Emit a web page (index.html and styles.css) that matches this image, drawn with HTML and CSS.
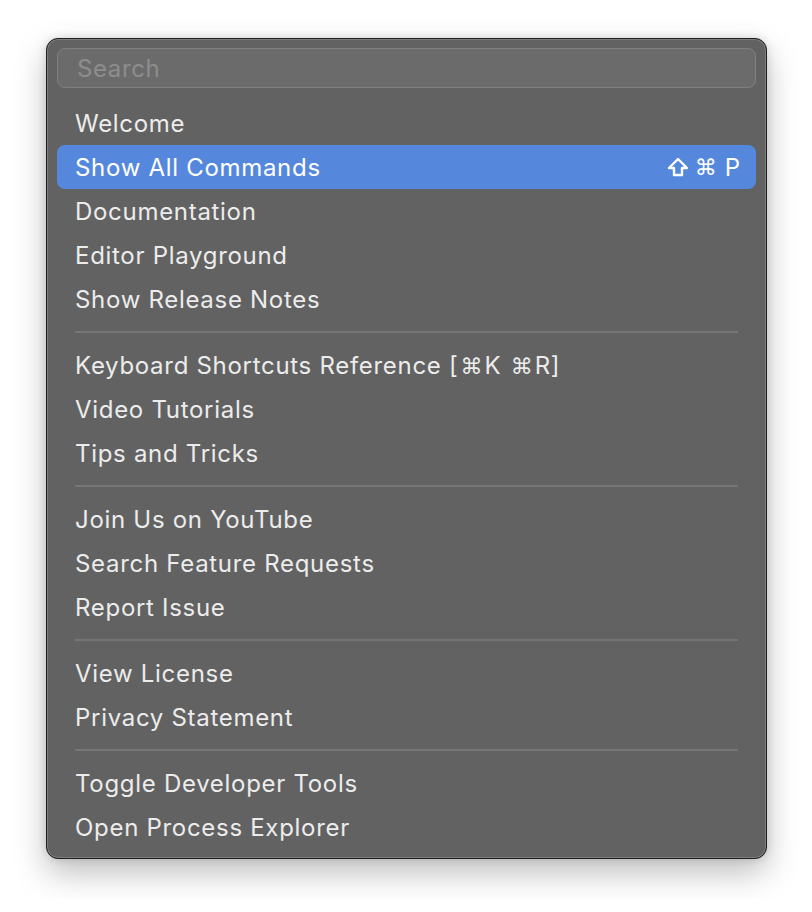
FILE: index.html
```html
<!DOCTYPE html>
<html>
<head>
<meta charset="utf-8">
<link rel="stylesheet" href="styles.css">
</head>
<body>
<div class="menu">
  <div class="search">Search</div>
  <div class="list">
    <div class="item"><span>Welcome</span></div>
    <div class="item active"><span>Show All Commands</span>
      <span class="keys">
        <svg class="shift" width="22" height="20" viewBox="0 0 22 20"><path d="M11 2 L20 11 L15 11 L15 18 L7 18 L7 11 L2 11 Z" fill="none" stroke="#fff" stroke-width="2.4" stroke-linejoin="round"/></svg>
        <span class="cmd">⌘</span>
        <span class="p">P</span>
      </span>
    </div>
    <div class="item"><span>Documentation</span></div>
    <div class="item"><span>Editor Playground</span></div>
    <div class="item"><span>Show Release Notes</span></div>
    <div class="sep"></div>
    <div class="item"><span>Keyboard Shortcuts Reference [<span class="sym">⌘</span>K <span class="sym">⌘</span>R]</span></div>
    <div class="item"><span>Video Tutorials</span></div>
    <div class="item"><span>Tips and Tricks</span></div>
    <div class="sep"></div>
    <div class="item"><span>Join Us on YouTube</span></div>
    <div class="item"><span>Search Feature Requests</span></div>
    <div class="item"><span>Report Issue</span></div>
    <div class="sep"></div>
    <div class="item"><span>View License</span></div>
    <div class="item"><span>Privacy Statement</span></div>
    <div class="sep"></div>
    <div class="item"><span>Toggle Developer Tools</span></div>
    <div class="item"><span>Open Process Explorer</span></div>
  </div>
</div>
</body>
</html>
```

FILE: styles.css
```css
html, body {
  margin: 0;
  background: #ffffff;
}
body {
  padding: 38px 0 40px 46px;
  font-family: "Inter", "Liberation Sans", sans-serif;
}
.menu {
  box-sizing: border-box;
  width: 721px;
  background: #626262;
  border: 1px solid #1e1e1e;
  border-radius: 12px;
  box-shadow: inset 0 0 0 1px #7e7e7e, 0 14px 32px rgba(0,0,0,0.25), 0 0 8px rgba(0,0,0,0.14);
  padding: 9px 10px 9px;
}
.search {
  box-sizing: border-box;
  height: 40px;
  border: 1px solid #808080;
  border-radius: 8px;
  background: #6b6b6b;
  color: #8d8d8d;
  font-size: 24px;
  letter-spacing: 0.6px;
  line-height: 39px;
  padding-left: 19px;
}
.list {
  margin-top: 13px;
  display: flex;
  flex-direction: column;
}
.item {
  height: 44px;
  display: flex;
  align-items: center;
  justify-content: space-between;
  padding: 0 16px 0 18px;
  color: #ececec;
  font-size: 24px;
  letter-spacing: 0.7px;
  border-radius: 8px;
  white-space: pre;
}
.item.active {
  background: #5588dc;
  color: #ffffff;
}
.sym {
  font-family: "DejaVu Sans", sans-serif;
  font-size: 22px;
  letter-spacing: 0;
  margin: 0 2px;
}
.keys {
  display: flex;
  align-items: center;
  gap: 6px;
}
.cmd {
  font-family: "DejaVu Sans", sans-serif;
  font-size: 22px;
  letter-spacing: 0;
}
.p {
  margin-left: 2px;
  letter-spacing: 0;
}
.sep {
  height: 22px;
  display: flex;
  align-items: center;
  padding: 0 18px;
}
.sep::before {
  content: "";
  flex: 1;
  height: 2px;
  background: #767676;
}
```
